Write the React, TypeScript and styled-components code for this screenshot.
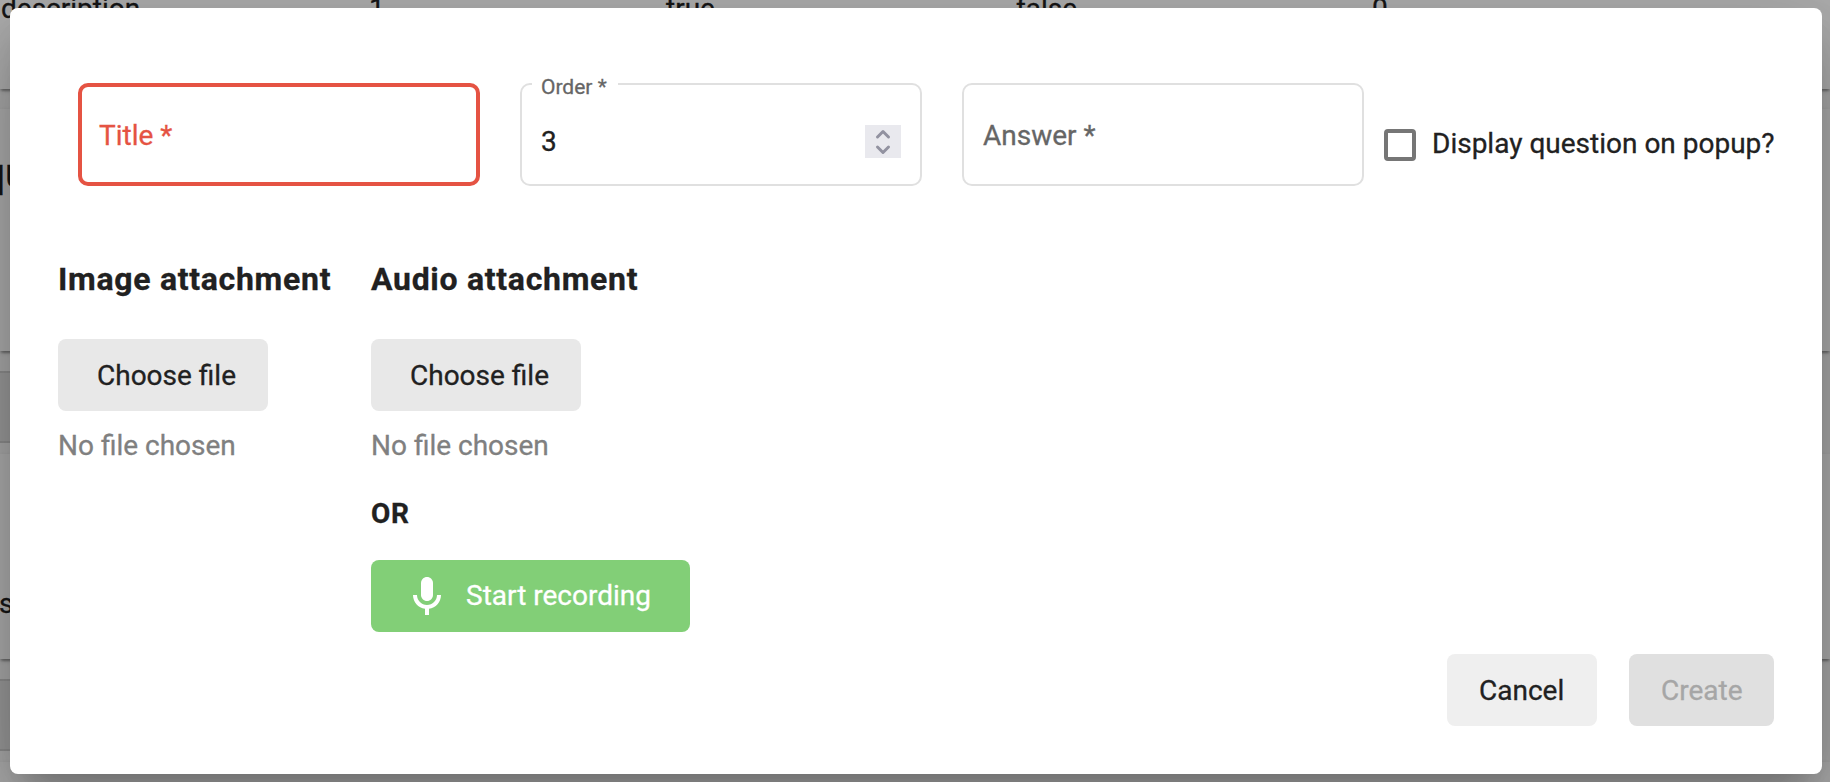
import React from "react";
import styled, { createGlobalStyle } from "styled-components";

const GlobalStyle = createGlobalStyle`
  * { box-sizing: border-box; }
  html, body { margin: 0; padding: 0; }
  body {
    width: 1830px;
    height: 782px;
    overflow: hidden;
    font-family: Roboto, "Liberation Sans", sans-serif;
    font-size: 28px;
    color: #212121;
    background: #fafafa;
    -webkit-text-stroke: 0.3px currentColor;
  }
  button { font-family: inherit; }
`;

const Screen = styled.div`
  position: relative;
  width: 1830px;
  height: 782px;
  overflow: hidden;
`;

const Page = styled.div`
  display: flex;
  flex-direction: column;
`;

const Card = styled.section<{ $height: number; $gap: number }>`
  flex: none;
  height: ${(p) => p.$height}px;
  margin-bottom: ${(p) => p.$gap}px;
  background: #fff;
  box-shadow: 0 4px 2px -2px rgba(0, 0, 0, 0.2), 0 2px 2px 0 rgba(0, 0, 0, 0.14),
    0 2px 6px 0 rgba(0, 0, 0, 0.12);
`;

const Gap = styled.div`
  flex: none;
  height: 103px;
  padding: 20px 0 11px;
`;

const GreyButton = styled.div`
  width: 120px;
  height: 72px;
  background: #e4e4e4;
  border: 2px solid #cfcfcf;
  border-left: 0;
`;

const TableRow = styled.div`
  display: grid;
  grid-template-columns: 368px 297px 350px 356px 1fr;
  line-height: 32px;
  padding-left: 1px;
  margin-top: -7px;
`;

const Cell = styled.span`
  letter-spacing: 0;
`;

const CardTitle = styled.h2`
  margin: 0;
  padding-top: 41px;
  font-size: 40px;
  line-height: 48px;
  font-weight: 700;
  letter-spacing: 1px;
  text-indent: -18px;
`;

const CardText = styled.p`
  margin: 0;
  padding-top: 134px;
  line-height: 32px;
  text-indent: -1px;
`;

const Backdrop = styled.div`
  position: absolute;
  inset: 0;
  background: rgba(0, 0, 0, 0.32);
  padding: 8px 8px 8px 10px;
`;

const Dialog = styled.form`
  width: 1812px;
  height: 766px;
  padding: 75px 48px 48px;
  display: flex;
  flex-direction: column;
  border-radius: 8px;
  background: #fff;
  box-shadow: 0 22px 30px -14px rgba(0, 0, 0, 0.2), 0 48px 76px 6px rgba(0, 0, 0, 0.14),
    0 18px 92px 16px rgba(0, 0, 0, 0.12);
`;

const FieldRow = styled.div`
  display: flex;
  align-items: flex-start;
  gap: 40px;
  height: 103px;
  padding-left: 20px;
`;

const Field = styled.div<{ $invalid?: boolean }>`
  position: relative;
  flex: none;
  width: 402px;
  height: 103px;
  display: flex;
  align-items: center;
  padding: 0 ${(p) => (p.$invalid ? 17 : 19)}px;
  border: ${(p) => (p.$invalid ? "4px solid #e55343" : "2px solid #e0e0e0")};
  border-radius: 10px;
`;

const Label = styled.span<{ $invalid?: boolean }>`
  padding-top: 2px;
  line-height: 32px;
  color: ${(p) => (p.$invalid ? "#e55343" : "#666")};
`;

const FloatingLabel = styled.span`
  position: absolute;
  left: 10px;
  top: -10px;
  width: 86px;
  padding-left: 9px;
  background: #fff;
  color: #666;
  font-size: 21px;
  line-height: 25px;
`;

const Value = styled.span`
  flex: 1;
  line-height: 32px;
  padding-top: 15px;
`;

const Spinner = styled.span`
  display: flex;
  width: 36px;
  height: 33px;
  margin: 14px 0 0;
  background: #e9e9ee;
`;

const CheckLabel = styled.label`
  display: flex;
  align-items: center;
  gap: 16px;
  height: 32px;
  margin: 46px 0 0 -20px;
  white-space: nowrap;
`;

const CheckText = styled.span`
  padding-bottom: 2px;
  line-height: 32px;
`;

const Box = styled.span`
  width: 32px;
  height: 32px;
  border: 4px solid #767676;
  border-radius: 4px;
`;

const Attachments = styled.div`
  display: flex;
  gap: 40px;
  margin-top: 75px;
`;

const Column = styled.div<{ $width: number }>`
  width: ${(p) => p.$width}px;
  display: flex;
  flex-direction: column;
  align-items: flex-start;
`;

const Heading = styled.h3`
  margin: 0 0 42px;
  font-size: 32px;
  line-height: 36px;
  font-weight: 700;
  letter-spacing: 0.7px;
  white-space: nowrap;
`;

const Button = styled.button<{
  $width: number;
  $bg: string;
  $color?: string;
  $pad?: number;
  $lift?: number;
}>`
  display: flex;
  align-items: center;
  flex: none;
  width: ${(p) => p.$width}px;
  height: 72px;
  padding: 0 0 ${(p) => p.$lift ?? 0}px ${(p) => p.$pad ?? 32}px;
  border: 0;
  border-radius: 8px;
  background: ${(p) => p.$bg};
  color: ${(p) => p.$color ?? "#212121"};
  font-size: 28px;
  white-space: nowrap;
`;

const MicIcon = styled.svg`
  flex: none;
  width: 48px;
  height: 48px;
  margin: 4px 15px 0 0;
`;

const Hint = styled.span`
  margin-top: 19px;
  line-height: 32px;
  color: #808080;
`;

const Or = styled.strong`
  margin: 36px 0 30px;
  line-height: 32px;
  font-weight: 700;
  letter-spacing: 0.7px;
`;

const Actions = styled.div`
  display: flex;
  justify-content: flex-end;
  gap: 32px;
  margin-top: auto;
`;

export default function App() {
  return (
    <Screen>
      <GlobalStyle />
      <Page>
        <Card $height={89} $gap={20}>
          <TableRow>
            <Cell>description</Cell>
            <Cell>1</Cell>
            <Cell>true</Cell>
            <Cell>false</Cell>
            <Cell>0</Cell>
          </TableRow>
        </Card>
        <Card $height={242} $gap={0}>
          <CardTitle>question</CardTitle>
        </Card>
        <Gap>
          <GreyButton />
        </Gap>
        <Card $height={205} $gap={0}>
          <CardText>s</CardText>
        </Card>
        <Gap>
          <GreyButton />
        </Gap>
        <Card $height={40} $gap={0} />
      </Page>
      <Backdrop>
        <Dialog>
          <FieldRow>
            <Field $invalid>
              <Label $invalid>Title *</Label>
            </Field>
            <Field>
              <FloatingLabel>Order *</FloatingLabel>
              <Value>3</Value>
              <Spinner>
                <svg width="36" height="33" viewBox="0 0 36 33" fill="none" stroke="#9292a0" strokeWidth="3" strokeLinecap="round" strokeLinejoin="round">
                  <path d="M12.5 12 L18 6.5 L23.5 12 M12.5 22 L18 27.5 L23.5 22" />
                </svg>
              </Spinner>
            </Field>
            <Field>
              <Label>Answer *</Label>
            </Field>
            <CheckLabel>
              <Box />
              <CheckText>Display question on popup?</CheckText>
            </CheckLabel>
          </FieldRow>
          <Attachments>
            <Column $width={273}>
              <Heading>Image attachment</Heading>
              <Button type="button" $width={210} $bg="#e8e8e8" $pad={39}>Choose file</Button>
              <Hint>No file chosen</Hint>
            </Column>
            <Column $width={330}>
              <Heading>Audio attachment</Heading>
              <Button type="button" $width={210} $bg="#e8e8e8" $pad={39}>Choose file</Button>
              <Hint>No file chosen</Hint>
              <Or>OR</Or>
              <Button type="button" $width={319} $bg="#82cf77" $color="#fff" $lift={2}>
                <MicIcon viewBox="0 0 24 24" fill="#fff">
                  <path d="M12 14c1.66 0 3-1.34 3-3V5c0-1.66-1.34-3-3-3S9 3.34 9 5v6c0 1.66 1.34 3 3 3z" />
                  <path d="M17 11c0 2.76-2.24 5-5 5s-5-2.24-5-5H5c0 3.53 2.61 6.43 6 6.92V21h2v-3.08c3.39-.49 6-3.39 6-6.92h-2z" />
                </MicIcon>
                Start recording
              </Button>
            </Column>
          </Attachments>
          <Actions>
            <Button type="button" $width={150} $bg="#efefef">Cancel</Button>
            <Button type="button" disabled $width={145} $bg="#e0e0e0" $color="#a6a6a6">Create</Button>
          </Actions>
        </Dialog>
      </Backdrop>
    </Screen>
  );
}
